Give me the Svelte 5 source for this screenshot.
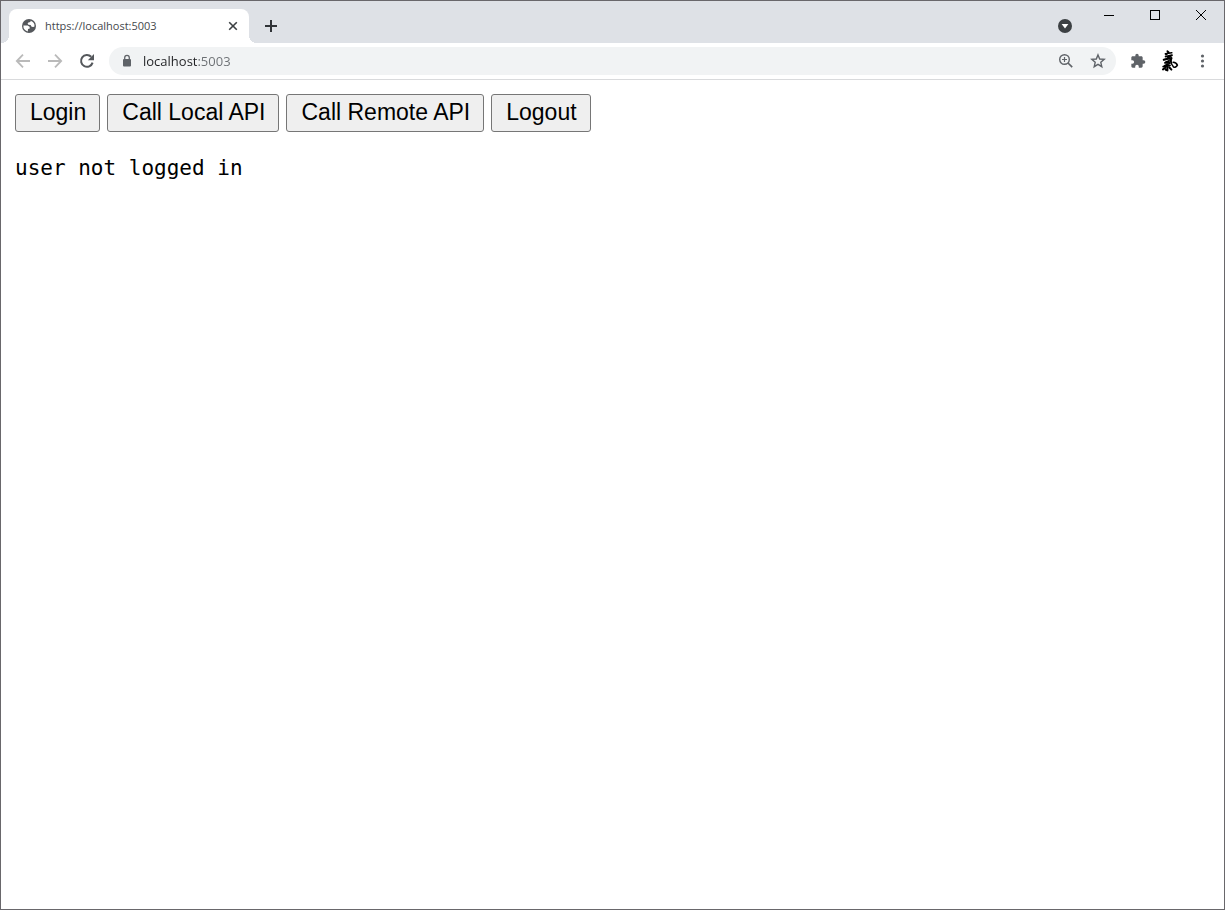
<script>
  let address = $state('localhost:5003');
  let status = $state('user not logged in');

  const actions = ['Login', 'Call Local API', 'Call Remote API', 'Logout'];
</script>

<div class="window">
  <header class="tab-strip">
    <div class="tab">
      <svg class="globe" viewBox="0 0 16 16" width="16" height="16" aria-hidden="true">
        <circle cx="8" cy="8" r="7" fill="#55585c" />
        <path d="M9.6 2.7 L9.4 4 L7.4 4.4 L6.6 5.6 L7.4 6.8 L9.6 7 L10.6 8.8 L12.2 9 L13.5 8.6 A5.6 5.6 0 0 0 9.6 2.7 Z" fill="#fff" />
        <path d="M2.4 7.6 H6.6 L8.6 8.8 L8.8 10.4 L7 11 L6.8 13.4 A5.6 5.6 0 0 1 2.4 7.6 Z" fill="#fff" />
      </svg>
      <span class="tab-title">https://localhost:5003</span>
      <button class="tab-close" aria-label="Close tab">
        <svg viewBox="0 0 16 16" width="16" height="16">
          <path d="M4.2 4.2 L11.8 11.8 M11.8 4.2 L4.2 11.8" stroke="#3c4043" stroke-width="1.6" fill="none" />
        </svg>
      </button>
    </div>
    <button class="new-tab" aria-label="New tab">
      <svg viewBox="0 0 16 16" width="16" height="16">
        <path d="M8 2 V14 M2 8 H14" stroke="#303337" stroke-width="2" fill="none" />
      </svg>
    </button>
    <div class="spacer"></div>
    <button class="tab-search" aria-label="Search tabs">
      <svg viewBox="0 0 16 16" width="16" height="16">
        <circle cx="8" cy="8" r="7" fill="#3c4043" />
        <path d="M4.6 6 H11.4 L8 10.4 Z" fill="#fff" />
      </svg>
    </button>
    <div class="window-controls">
      <button aria-label="Minimize">
        <svg viewBox="0 0 12 12" width="12" height="12" shape-rendering="crispEdges">
          <path d="M1 6.5 H11" stroke="#000" fill="none" />
        </svg>
      </button>
      <button aria-label="Maximize">
        <svg viewBox="0 0 12 12" width="12" height="12" shape-rendering="crispEdges">
          <rect x="1.5" y="1.5" width="9" height="9" stroke="#000" fill="none" />
        </svg>
      </button>
      <button aria-label="Close">
        <svg viewBox="0 0 12 12" width="12" height="12">
          <path d="M1 1 L11 11 M11 1 L1 11" stroke="#000" fill="none" />
        </svg>
      </button>
    </div>
  </header>

  <nav class="toolbar">
    <button class="tool" aria-label="Back">
      <svg viewBox="0 0 16 16" width="16" height="16">
        <path d="M15 8 H2 M8 1.6 L1.8 8 L8 14.4" stroke="#bababa" stroke-width="1.8" fill="none" />
      </svg>
    </button>
    <button class="tool" aria-label="Forward">
      <svg viewBox="0 0 16 16" width="16" height="16">
        <path d="M1 8 H14 M8 1.6 L14.2 8 L8 14.4" stroke="#bababa" stroke-width="1.8" fill="none" />
      </svg>
    </button>
    <button class="tool" aria-label="Reload">
      <svg viewBox="0 0 16 16" width="16" height="16">
        <path d="M13.6 9.6 A5.9 5.9 0 1 1 12.2 3.8" stroke="#55585c" stroke-width="2" fill="none" />
        <path d="M15 1 V7.2 H8.8 Z" fill="#55585c" />
      </svg>
    </button>

    <div class="omnibox">
      <svg class="lock" viewBox="0 0 16 16" width="16" height="16" aria-hidden="true">
        <rect x="4" y="6" width="8" height="7.5" rx="1" fill="#5f6368" />
        <path d="M5.7 6.5 V4.7 A2.3 2.3 0 0 1 10.3 4.7 V6.5" stroke="#5f6368" stroke-width="1.3" fill="none" />
      </svg>
      <input class="address" type="text" aria-label="Address" bind:value={address} spellcheck="false" />
      <button class="tool" aria-label="Zoom">
        <svg viewBox="0 0 16 16" width="16" height="16">
          <circle cx="6.5" cy="6.5" r="4.8" stroke="#5f6368" stroke-width="1.4" fill="none" />
          <path d="M10 10 L14.2 14.2" stroke="#5f6368" stroke-width="1.7" />
          <path d="M6.5 4 V9 M4 6.5 H9" stroke="#5f6368" stroke-width="1.2" />
        </svg>
      </button>
      <button class="tool" aria-label="Bookmark this tab">
        <svg viewBox="0 0 16 16" width="16" height="16">
          <path d="M8 1.9 L9.7 6 L14.2 6.4 L10.8 9.3 L11.8 13.7 L8 11.4 L4.2 13.7 L5.2 9.3 L1.8 6.4 L6.3 6 Z" stroke="#5f6368" stroke-width="1.4" fill="none" />
        </svg>
      </button>
    </div>

    <button class="tool" aria-label="Extensions">
      <svg viewBox="0 0 24 24" width="16" height="16">
        <path
          d="M20.5 11H19V7c0-1.1-.9-2-2-2h-4V3.5a2.5 2.5 0 0 0-5 0V5H4c-1.1 0-2 .9-2 2v3.8h1.5a2.7 2.7 0 0 1 0 5.4H2V20c0 1.1.9 2 2 2h3.8v-1.5a2.7 2.7 0 0 1 5.4 0V22H17c1.1 0 2-.9 2-2v-4h1.5a2.5 2.5 0 0 0 0-5z"
          fill="#5f6368"
        />
      </svg>
    </button>
    <button class="tool" aria-label="Profile">
      <!-- brush-style avatar -->
      <svg viewBox="0 0 20 24" width="20" height="24" fill="none" stroke="#000" stroke-linecap="round" stroke-linejoin="round">
        <path d="M7.4 2.2 L8.8 3.4 L6 5.6" stroke-width="1.8" />
        <path d="M5.4 4.8 L11.8 3.8" stroke-width="1.6" />
        <path d="M5.6 7.6 L12 6.2 L8 8.8" stroke-width="1.8" />
        <path d="M3.8 10.8 L8 9.6 L11.4 9.2 L10.4 12" stroke-width="2.2" />
        <path d="M10.8 11 Q11 15.4 13.4 17.8 Q15.6 19.2 17.4 16.2 Q16.4 13.4 13.2 13.2" stroke-width="1.6" />
        <path d="M9 11.8 L5 13.8 L10 14 L4.6 16.8" stroke-width="1.9" />
        <path d="M3.2 17.6 L10 16.4" stroke-width="1.8" />
        <path d="M7.4 15.8 V21.4 L5.8 20.8" stroke-width="2" />
        <path d="M5.6 18.6 L3 20.4 M9.2 18.2 L11.4 20.6" stroke-width="2" />
      </svg>
    </button>
    <button class="tool" aria-label="Menu">
      <svg viewBox="0 0 16 16" width="16" height="16" fill="#5f6368">
        <circle cx="8.5" cy="3" r="1.6" />
        <circle cx="8.5" cy="8" r="1.6" />
        <circle cx="8.5" cy="13" r="1.6" />
      </svg>
    </button>
  </nav>

  <main>
    <div class="actions">
      {#each actions as action}
        <button>{action}</button>
      {/each}
    </div>
    <pre>{status}</pre>
  </main>
</div>

<style>
  :global(body) {
    margin: 0;
  }

  .window {
    box-sizing: border-box;
    min-height: 100vh;
    border: 1px solid #69676b;
    background: #fff;
    font-family: "Open Sans", "Noto Sans", sans-serif;
  }

  .window button {
    cursor: default;
  }

  svg {
    display: block;
    flex: none;
  }

  .tab-strip {
    display: flex;
    align-items: flex-end;
    height: 42px;
    padding-left: 8px;
    background: #dee1e6;
  }

  .tab-strip button,
  .tool {
    display: flex;
    align-items: center;
    justify-content: center;
    flex: none;
    width: 28px;
    height: 28px;
    padding: 0;
    border: 0;
    border-radius: 14px;
    background: none;
  }

  .tab {
    position: relative;
    display: flex;
    align-items: center;
    box-sizing: border-box;
    width: 240px;
    height: 34px;
    padding: 0 8px 0 12px;
    border-radius: 8px 8px 0 0;
    background: #fff;
  }

  /* curved feet on both sides of the active tab */
  .tab::before,
  .tab::after {
    content: '';
    position: absolute;
    bottom: 0;
    width: 8px;
    height: 8px;
  }

  .tab::before {
    right: 100%;
    background: radial-gradient(circle at 0 0, transparent 8px, #fff 8px);
  }

  .tab::after {
    left: 100%;
    background: radial-gradient(circle at 100% 0, transparent 8px, #fff 8px);
  }

  .tab-title {
    flex: 1;
    margin-left: 8px;
    overflow: hidden;
    white-space: nowrap;
    font-size: 11px;
    line-height: 16px;
    color: #45484c;
  }

  .tab-strip .tab-close {
    width: 16px;
    height: 16px;
  }

  .new-tab {
    margin: 0 0 3px 8px;
  }

  .spacer {
    flex: 1;
  }

  .tab-search {
    margin: 0 7px 3px 0;
  }

  .window-controls {
    display: flex;
    align-self: flex-start;
  }

  .window-controls button {
    width: 46px;
    border-radius: 0;
  }

  .toolbar {
    display: flex;
    align-items: center;
    gap: 4px;
    height: 36px;
    padding: 0 8px;
    border-bottom: 1px solid #d9dadc;
  }

  .omnibox {
    display: flex;
    align-items: center;
    flex: 1;
    gap: 4px;
    height: 28px;
    margin: 0 4px;
    padding: 0 4px 0 10px;
    border-radius: 14px;
    background: #f1f3f4;
  }

  /* the host is darker than the port */
  .address {
    flex: 1;
    min-width: 0;
    margin-left: 4px;
    padding: 0;
    border: 0;
    outline: 0;
    background: linear-gradient(to right, #202124 54px, #6b6f73 54px);
    background-clip: text;
    color: transparent;
    caret-color: #202124;
    font: 13px/20px "Open Sans", "Noto Sans", sans-serif;
  }

  main {
    padding: 14px;
  }

  .actions {
    display: flex;
    flex-wrap: wrap;
    gap: 7px;
  }

  .actions button {
    height: 38px;
    padding: 0 13px 2px 14px;
    border: 1px solid #767676;
    border-radius: 3px;
    background: #efefef;
    color: #000;
    font: 23px/34px "Liberation Sans", Arial, sans-serif;
  }

  pre {
    margin: 23px 0 0;
    font: 21px/27px "DejaVu Sans Mono", monospace;
    color: #000;
  }
</style>
